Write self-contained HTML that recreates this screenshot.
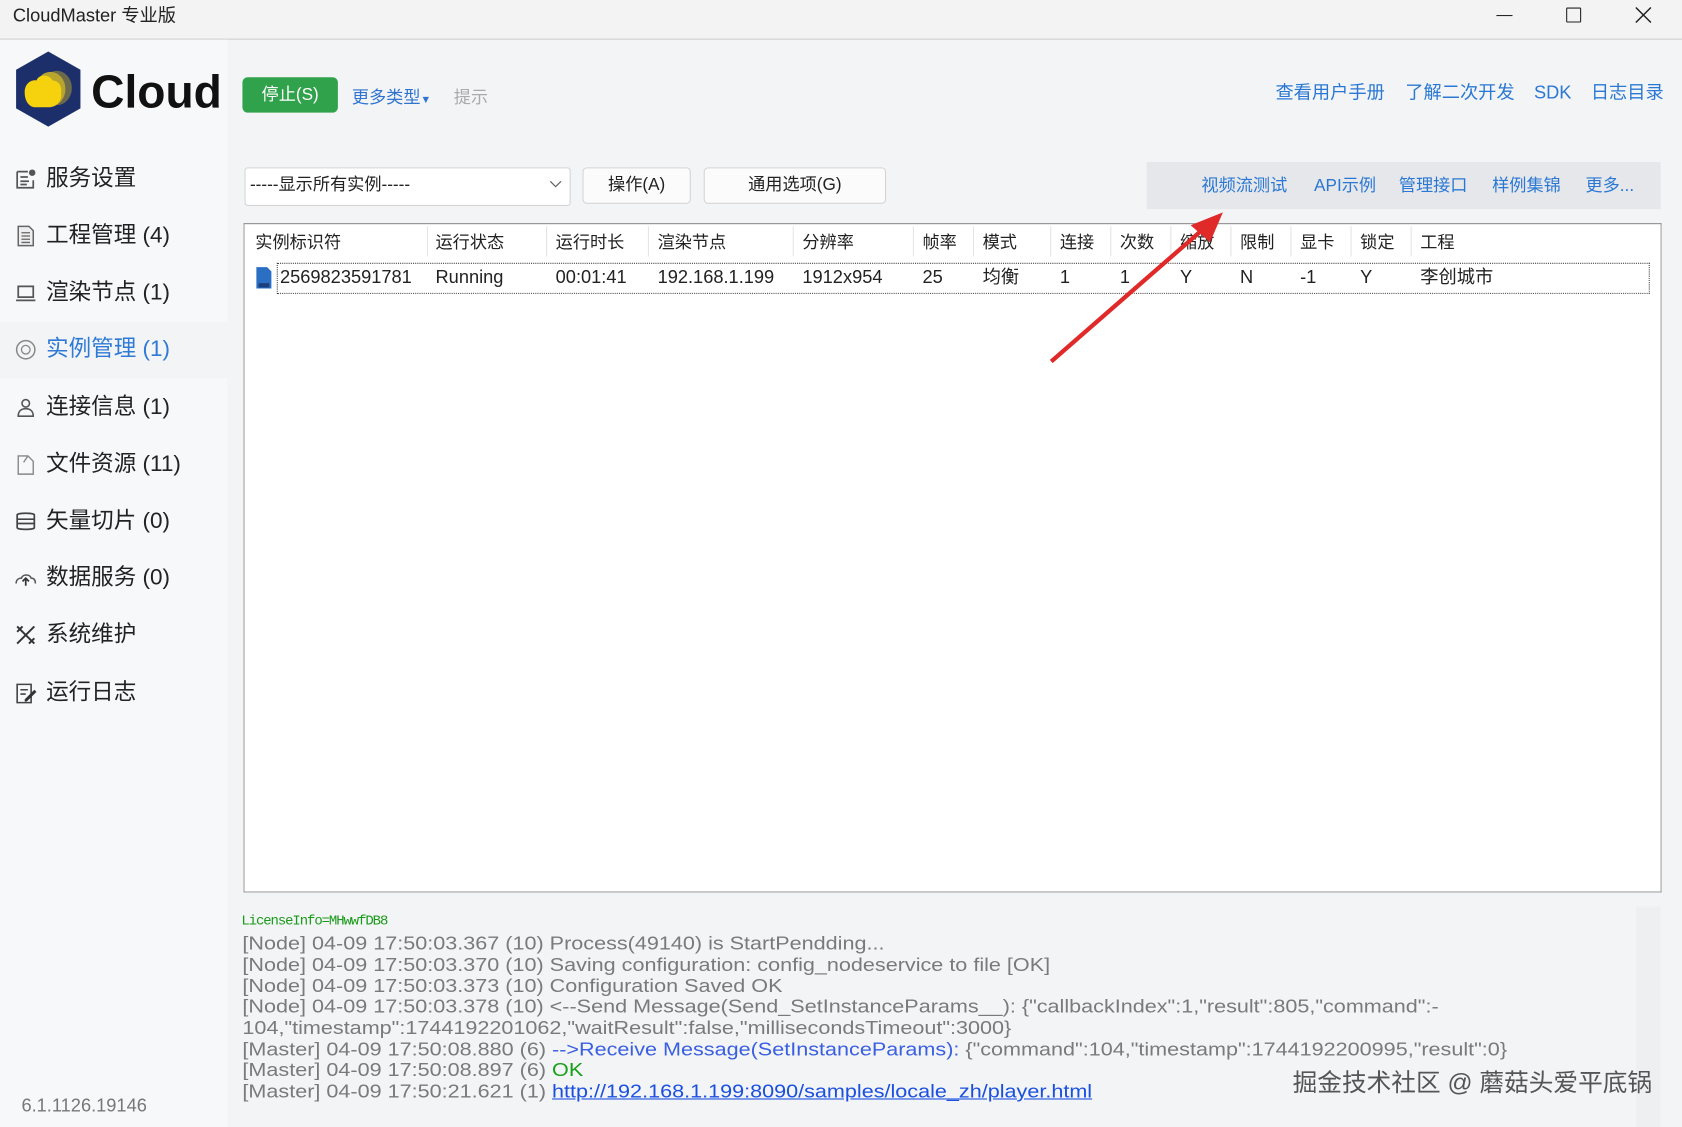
<!DOCTYPE html>
<html><head><meta charset="utf-8">
<style>
html,body{margin:0;padding:0;width:1682px;height:1127px;overflow:hidden;background:#f3f4f6;}
#w{position:absolute;left:0;top:0;width:1568px;height:1051px;transform:scale(1.0727);transform-origin:0 0;background:#f3f4f6;font-family:"Liberation Sans","Noto Sans CJK SC",sans-serif;color:#222;}
.a{position:absolute;white-space:nowrap;}
.tb{left:0;top:0;width:1568px;height:36px;background:#f3f3f3;border-bottom:1px solid #cfcfcf;}
.side{left:0;top:37px;width:212px;height:1014px;background:#f7f8fa;}
.nav{left:43px;font-size:21px;line-height:24px;color:#222;}
.ic{left:13px;width:22px;height:22px;}
.blue{color:#2f7ad6;}
.lk{font-size:17px;color:#2b78d4;line-height:20px;}
.btn{background:#fbfbfb;border:1px solid #d5d5d5;border-radius:4px;font-size:16px;text-align:center;line-height:32px;height:32px;}
.th{top:217px;font-size:16px;line-height:20px;color:#222;}
.td{top:249px;font-size:17px;line-height:20px;color:#222;}
.cd{top:211px;width:1px;height:28px;background:#e4e4e4;}
.log{left:226px;font-size:17.5px;line-height:19.7px;color:#7a7a7a;transform:scaleX(1.15);transform-origin:0 0;}
</style></head><body><div id="w">
<div class="a tb"></div>
<div class="a" style="left:12px;top:4px;font-size:17px;line-height:22px;">CloudMaster 专业版</div>
<div class="a" style="left:1395px;top:14px;width:15px;height:1px;background:#222;"></div>
<div class="a" style="left:1460px;top:7px;width:12px;height:12px;border:1.5px solid #222;border-radius:1px;"></div>
<svg class="a" style="left:1524px;top:6px" width="16" height="16"><path d="M1 1L15 15M15 1L1 15" stroke="#222" stroke-width="1.4"/></svg>

<div class="a side"></div>
<div class="a" style="left:0;top:300px;width:212px;height:53px;background:#f3f4f6;"></div>

<svg class="a" style="left:13px;top:46px" width="64" height="74" viewBox="0 0 64 74">
<polygon points="32,2 62,19 62,55 32,72 2,55 2,19" fill="#1d2f6b"/>
<ellipse cx="40" cy="36" rx="14" ry="16" fill="#6b6a4a"/>
<ellipse cx="34" cy="37" rx="14" ry="16" fill="#b8a530"/>
<path d="M10 40c0-8 6-12 11-11 2-6 12-6 15 0 6 0 9 6 8 12 1 7-4 13-12 13H20c-6 0-10-6-10-14z" fill="#f5d20d"/>
</svg>
<div class="a" style="left:85px;top:61px;font-size:43px;font-weight:bold;line-height:50px;color:#111;">Cloud</div>
<div class="a" style="left:226px;top:72px;width:89px;height:33px;background:#31a24c;border-radius:5px;color:#fff;font-size:16px;text-align:center;line-height:33px;">停止(S)</div>
<div class="a" style="left:328px;top:82px;font-size:16px;color:#2f74d0;line-height:20px;">更多类型<span style="font-size:10px">▼</span></div>
<div class="a" style="left:423px;top:82px;font-size:16px;color:#aaa;line-height:20px;">提示</div>
<div class="a lk" style="left:1189px;top:77px;">查看用户手册</div>
<div class="a lk" style="left:1310px;top:77px;">了解二次开发</div>
<div class="a lk" style="left:1430px;top:77px;">SDK</div>
<div class="a lk" style="left:1483px;top:77px;">日志目录</div>

<svg class="a ic" style="top:156px" viewBox="0 0 22 22"><path d="M3 4h10M3 4v15h15v-7M6 9h7M6 13h8M6 16h6" fill="none" stroke="#555" stroke-width="1.6"/><circle cx="17" cy="5" r="3" fill="#555"/></svg>
<div class="a nav" style="top:155px;">服务设置</div>
<svg class="a ic" style="top:209px" viewBox="0 0 22 22"><path d="M4 2h10l4 4v14H4z" fill="#eee" stroke="#666" stroke-width="1.4"/><path d="M7 8h8M7 11h8M7 14h8M7 17h8" stroke="#666" stroke-width="1.2"/></svg>
<div class="a nav" style="top:208px;">工程管理 (4)</div>
<svg class="a ic" style="top:262px" viewBox="0 0 22 22"><path d="M4 5h14v10H4z M2 18h18" fill="none" stroke="#555" stroke-width="1.6"/></svg>
<div class="a nav" style="top:261px;">渲染节点 (1)</div>
<svg class="a ic" style="top:315px" viewBox="0 0 22 22"><circle cx="11" cy="11" r="8.5" fill="none" stroke="#888" stroke-width="1.4"/><circle cx="11" cy="11" r="4" fill="none" stroke="#888" stroke-width="1.2"/></svg>
<div class="a nav blue" style="top:314px;">实例管理 (1)</div>
<svg class="a ic" style="top:369px" viewBox="0 0 22 22"><circle cx="11" cy="7" r="3.5" fill="none" stroke="#555" stroke-width="1.5"/><path d="M4 19c0-5 3-7 7-7s7 2 7 7z" fill="none" stroke="#555" stroke-width="1.5"/></svg>
<div class="a nav" style="top:368px;">连接信息 (1)</div>
<svg class="a ic" style="top:422px" viewBox="0 0 22 22"><path d="M4 3h9l5 5v12H4z M13 3l-4 6" fill="none" stroke="#888" stroke-width="1.3"/></svg>
<div class="a nav" style="top:421px;">文件资源 (11)</div>
<svg class="a ic" style="top:475px" viewBox="0 0 22 22"><path d="M3 5c0-2 16-2 16 0v12c0 2-16 2-16 0z M3 9h16M3 13h16" fill="none" stroke="#444" stroke-width="1.6"/></svg>
<div class="a nav" style="top:474px;">矢量切片 (0)</div>
<svg class="a ic" style="top:528px" viewBox="0 0 22 22"><path d="M2 16c0-4 3-5 5-5 1-4 8-4 9 0 3 0 4 2 4 5" fill="none" stroke="#555" stroke-width="1.4"/><path d="M11 18v-6M8 14l3-3 3 3" stroke="#333" stroke-width="1.6" fill="none"/></svg>
<div class="a nav" style="top:527px;">数据服务 (0)</div>
<svg class="a ic" style="top:581px" viewBox="0 0 22 22"><path d="M3 3l16 16M19 3L3 19M3 8l5-5M14 19l5-5" stroke="#333" stroke-width="1.8"/></svg>
<div class="a nav" style="top:580px;">系统维护</div>
<svg class="a ic" style="top:635px" viewBox="0 0 22 22"><path d="M3 3h13v17H3z M6 8h7M6 12h5" fill="none" stroke="#444" stroke-width="1.5"/><path d="M10 17l9-9 2 2-9 9h-2z" fill="#333"/></svg>
<div class="a nav" style="top:634px;">运行日志</div>

<div class="a" style="left:228px;top:156px;width:302px;height:34px;background:#fff;border:1px solid #d5d5d5;border-radius:3px;"></div>
<div class="a" style="left:233px;top:163px;font-size:16px;line-height:20px;">-----显示所有实例-----</div>
<svg class="a" style="left:512px;top:168px" width="12" height="8"><path d="M1 1l5 5 5-5" fill="none" stroke="#666" stroke-width="1.2"/></svg>
<div class="a btn" style="left:543px;top:156px;width:99px;">操作(A)</div>
<div class="a btn" style="left:656px;top:156px;width:168px;">通用选项(G)</div>
<div class="a" style="left:1069px;top:151px;width:479px;height:44px;background:#e5e7ea;"></div>
<div class="a lk" style="left:1120px;top:164px;font-size:16px;">视频流测试</div>
<div class="a lk" style="left:1225px;top:164px;font-size:16px;">API示例</div>
<div class="a lk" style="left:1304px;top:164px;font-size:16px;">管理接口</div>
<div class="a lk" style="left:1391px;top:164px;font-size:16px;">样例集锦</div>
<div class="a lk" style="left:1478px;top:164px;font-size:16px;">更多...</div>

<div class="a" style="left:227px;top:208px;width:1320px;height:622px;background:#fff;border:1px solid #a0a0a0;border-top-color:#8a8a8a;"></div>
<div class="a cd" style="left:398px"></div><div class="a cd" style="left:509px"></div><div class="a cd" style="left:604px"></div><div class="a cd" style="left:739px"></div><div class="a cd" style="left:851px"></div><div class="a cd" style="left:907px"></div><div class="a cd" style="left:979px"></div><div class="a cd" style="left:1035px"></div><div class="a cd" style="left:1091px"></div><div class="a cd" style="left:1147px"></div><div class="a cd" style="left:1203px"></div><div class="a cd" style="left:1259px"></div><div class="a cd" style="left:1315px"></div>
<div class="a th" style="left:238px">实例标识符</div><div class="a th" style="left:406px">运行状态</div><div class="a th" style="left:518px">运行时长</div><div class="a th" style="left:613px">渲染节点</div><div class="a th" style="left:748px">分辨率</div><div class="a th" style="left:860px">帧率</div><div class="a th" style="left:916px">模式</div><div class="a th" style="left:988px">连接</div><div class="a th" style="left:1044px">次数</div><div class="a th" style="left:1100px">缩放</div><div class="a th" style="left:1156px">限制</div><div class="a th" style="left:1212px">显卡</div><div class="a th" style="left:1268px">锁定</div><div class="a th" style="left:1324px">工程</div>
<div class="a" style="left:258px;top:245px;width:1278px;height:27px;border:1px dotted #444;"></div>
<svg class="a" style="left:238px;top:248px" width="16" height="22"><path d="M1 1h10l4 4v16H1z" fill="#2a6fc4"/><rect x="3" y="16" width="10" height="4" fill="#1a3f7a"/></svg>
<div class="a td" style="left:261px">2569823591781</div><div class="a td" style="left:406px">Running</div><div class="a td" style="left:518px">00:01:41</div><div class="a td" style="left:613px">192.168.1.199</div><div class="a td" style="left:748px">1912x954</div><div class="a td" style="left:860px">25</div><div class="a td" style="left:916px">均衡</div><div class="a td" style="left:988px">1</div><div class="a td" style="left:1044px">1</div><div class="a td" style="left:1100px">Y</div><div class="a td" style="left:1156px">N</div><div class="a td" style="left:1212px">-1</div><div class="a td" style="left:1268px">Y</div><div class="a td" style="left:1324px">李创城市</div>

<svg class="a" style="left:970px;top:190px" width="180" height="160"><path d="M10 147L158 18" stroke="#e02a2a" stroke-width="4"/><polygon points="170,8 140,20 158,36" fill="#e02a2a"/></svg>

<div class="a" style="left:1525px;top:845px;width:23px;height:206px;background:#eeeff1;"></div>
<div class="a" style="left:225px;top:851px;font-size:13px;line-height:16px;color:#1a9a1a;font-family:'Liberation Mono',monospace;letter-spacing:-1px;">LicenseInfo=MHwwfDB8</div>
<div class="a log" style="top:870px">[Node] 04-09 17:50:03.367 (10) Process(49140) is StartPendding...</div>
<div class="a log" style="top:890px">[Node] 04-09 17:50:03.370 (10) Saving configuration: config_nodeservice to file [OK]</div>
<div class="a log" style="top:910px">[Node] 04-09 17:50:03.373 (10) Configuration Saved OK</div>
<div class="a log" style="top:929px">[Node] 04-09 17:50:03.378 (10) &lt;--Send Message(Send_SetInstanceParams__): {"callbackIndex":1,"result":805,"command":-</div>
<div class="a log" style="top:949px">104,"timestamp":1744192201062,"waitResult":false,"millisecondsTimeout":3000}</div>
<div class="a log" style="top:969px">[Master] 04-09 17:50:08.880 (6) <span style="color:#3a5fe0">--&gt;Receive Message(SetInstanceParams):</span> {"command":104,"timestamp":1744192200995,"result":0}</div>
<div class="a log" style="top:988px">[Master] 04-09 17:50:08.897 (6) <span style="color:#18a018">OK</span></div>
<div class="a log" style="top:1008px">[Master] 04-09 17:50:21.621 (1) <span style="color:#1a4fe0;text-decoration:underline">http://192.168.1.199:8090/samples/locale_zh/player.html</span></div>
<div class="a" style="left:20px;top:1021px;font-size:17px;color:#777;line-height:20px;">6.1.1126.19146</div>
<div class="a" style="left:1205px;top:996px;font-size:23px;color:#555;line-height:27px;">掘金技术社区 @ 蘑菇头爱平底锅</div>
</div></body></html>
